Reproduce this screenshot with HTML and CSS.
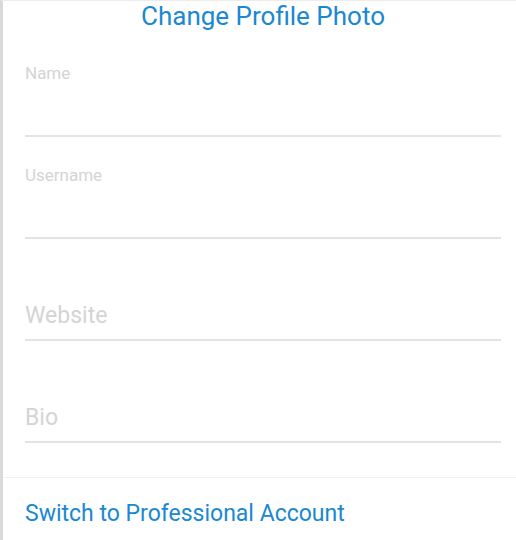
FILE: index.html
```html
<!DOCTYPE html>
<html lang="en">
<head>
    <meta charset="UTF-8">
    <meta name="viewport" content="width=device-width, initial-scale=1.0">
    <title>Edit Profile</title>
    <link rel="stylesheet" href="styles.css">
</head>
<body>

<div class="screen">
    <h1 class="change-photo">Change Profile Photo</h1>

    <div class="form">
        <div class="field field-filled">
            <span class="label">Name</span>
        </div>
        <div class="field field-filled">
            <span class="label">Username</span>
        </div>
        <div class="field field-empty">
            <span class="placeholder">Website</span>
        </div>
        <div class="field field-empty">
            <span class="placeholder">Bio</span>
        </div>
    </div>

    <div class="footer">
        <a class="switch-link" href="#">Switch to Professional Account</a>
    </div>
</div>

</body>
</html>
```
FILE: styles.css
```css
html, body {
    margin: 0;
    background: #fff;
}
body {
    font-family: Roboto, "Liberation Sans", Arial, sans-serif;
}
.screen {
    height: 540px;
    border-left: 3px solid #d9d9d9;
    border-top: 1px solid #ececec;
    box-sizing: border-box;
}
.change-photo {
    margin: 0;
    height: 34px;
    padding-left: 7px;
    font-size: 26px;
    font-weight: 400;
    line-height: 30px;
    text-align: center;
    color: #1a88d2;
}
.form {
    padding: 0 15px 0 22px;
}
.field {
    height: 102px;
    box-sizing: border-box;
    border-bottom: 2px solid #e4e4e4;
    display: flex;
    flex-direction: column;
}
.field-filled {
    padding-top: 28px;
}
.field-empty {
    justify-content: flex-end;
    padding-bottom: 10px;
}
.label {
    font-size: 17px;
    line-height: 20px;
    color: #d4d4d4;
}
.placeholder {
    font-size: 23px;
    line-height: 27px;
    color: #d4d4d4;
}
.footer {
    margin-top: 34px;
    border-top: 1px solid #f0f0f0;
    padding: 22px 22px 0;
}
.switch-link {
    font-size: 23px;
    line-height: 27px;
    color: #1a88d2;
    text-decoration: none;
}
```
